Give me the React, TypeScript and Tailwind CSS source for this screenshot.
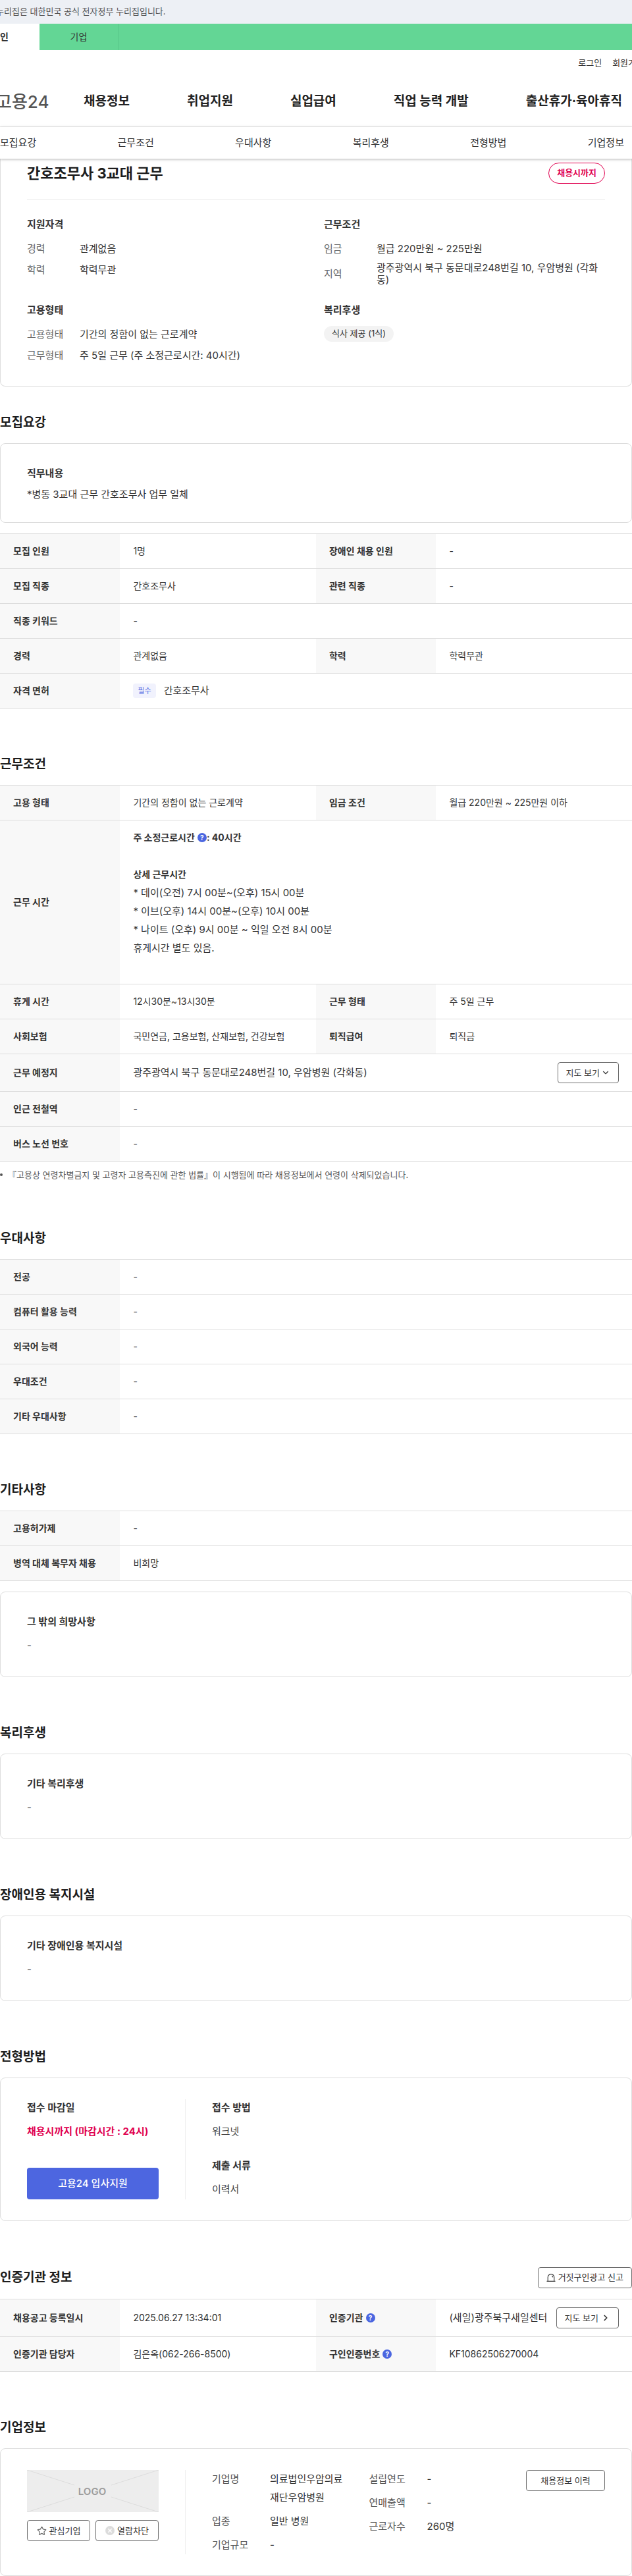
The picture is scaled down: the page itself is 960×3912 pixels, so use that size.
import type { ReactNode } from "react";
import { ChevronDown, ChevronRight, Star } from "lucide-react";

const mainMenu = ["채용정보", "취업지원", "실업급여", "직업 능력 개발", "출산휴가·육아휴직"];

const tabs = ["모집요강", "근무조건", "우대사항", "복리후생", "전형방법", "기업정보"];

type Cell = { label: ReactNode; value: ReactNode };

const summary: { title: string; items: { label: string; value: string }[] }[] = [
  {
    title: "지원자격",
    items: [
      { label: "경력", value: "관계없음" },
      { label: "학력", value: "학력무관" },
    ],
  },
  {
    title: "근무조건",
    items: [
      { label: "임금", value: "월급 220만원 ~ 225만원" },
      { label: "지역", value: "광주광역시 북구 동문대로248번길 10, 우암병원 (각화동)" },
    ],
  },
  {
    title: "고용형태",
    items: [
      { label: "고용형태", value: "기간의 정함이 없는 근로계약" },
      { label: "근무형태", value: "주 5일 근무 (주 소정근로시간: 40시간)" },
    ],
  },
];

const shiftLines = [
  "* 데이(오전) 7시 00분~(오후) 15시 00분",
  "* 이브(오후) 14시 00분~(오후) 10시 00분",
  "* 나이트 (오후) 9시 00분 ~ 익일 오전 8시 00분",
  "휴게시간 별도 있음.",
];

function HelpButton({ label }: { label: string }) {
  return (
    <button
      type="button"
      aria-label={label}
      className="inline-flex h-3.5 w-3.5 items-center justify-center rounded-full bg-[#4b66e0] text-[10px] leading-none font-bold text-white"
    >
      ?
    </button>
  );
}

function OutlineButton({ children, className = "px-3" }: { children: ReactNode; className?: string }) {
  return (
    <button
      type="button"
      className={`flex h-8 shrink-0 items-center justify-center rounded border border-[#6d6d6d] bg-white text-[13px] whitespace-nowrap text-[#333] ${className}`}
    >
      {children}
    </button>
  );
}

function Section({ title, action, children }: { title: string; action?: ReactNode; children: ReactNode }) {
  return (
    <section className={action ? "mt-[70px]" : "mt-[71px] first:mt-[41px]"}>
      <div className={`flex items-center justify-between ${action ? "mb-4" : "mb-[17px]"}`}>
        <h2 className="text-[19px] leading-7 font-bold text-[#1d1d1d]">{title}</h2>
        {action}
      </div>
      {children}
    </section>
  );
}

function Box({ children, className = "" }: { children: ReactNode; className?: string }) {
  return <div className={`rounded-lg border border-[#ddd] px-10 pt-8 text-[15px] ${className}`}>{children}</div>;
}

function NoteBox({ title, className = "" }: { title: string; className?: string }) {
  return (
    <Box className={`pb-[34px] ${className}`}>
      <h3 className="leading-[26px] font-bold">{title}</h3>
      <p className="mt-2.5 leading-[26px] text-[#444]">-</p>
    </Box>
  );
}

function InfoTable({ rows }: { rows: Cell[][] }) {
  return (
    <table className="w-full table-fixed border-separate border-spacing-0 border-t border-[#ddd] text-sm">
      <colgroup>
        <col className="w-[19%]" />
        <col className="w-[31%]" />
        <col className="w-[19%]" />
        <col className="w-[31%]" />
      </colgroup>
      <tbody>
        {rows.map((row, i) => (
          <tr key={i}>
            {row.map((cell, j) => [
              <th
                key={`h${j}`}
                scope="row"
                className="h-[53px] border-b border-[#ddd] bg-[#f8f8f8] px-5 text-left font-bold text-[#333]"
              >
                {cell.label}
              </th>,
              <td
                key={`d${j}`}
                colSpan={row.length === 1 ? 3 : 1}
                className="border-b border-[#ddd] px-5 py-3 text-[#333]"
              >
                {cell.value}
              </td>,
            ])}
          </tr>
        ))}
      </tbody>
    </table>
  );
}

function Header() {
  return (
    <header className="overflow-hidden">
      <div className="flex h-9 items-center bg-[#edf0f5] text-[13px] text-[#555]">
        <span className="-ml-[6px]">누리집은 대한민국 공식 전자정부 누리집입니다.</span>
      </div>

      <div className="flex h-10 bg-[#63d695] text-sm">
        <a href="#" className="-ml-[60px] flex w-[120px] items-center justify-center bg-white font-bold text-[#333]">
          개인
        </a>
        <a href="#" className="flex w-[120px] items-center justify-center border-r border-[#57c688] text-[#333]">
          기업
        </a>
      </div>

      <div className="flex h-10 items-center justify-end gap-4 text-[13px] whitespace-nowrap text-[#333]">
        <a href="#">로그인</a>
        <a href="#" className="-mr-[18px]">
          회원가입
        </a>
      </div>

      <div className="flex h-[77px] items-center border-b border-[#eee]">
        <a href="#" className="-ml-[6px] w-[133px] text-[26px] font-medium whitespace-nowrap text-[#555]">
          고용24
        </a>
        <nav className="flex flex-1 justify-between pr-[15px] text-[19px] font-bold whitespace-nowrap text-[#222]">
          {mainMenu.map((item) => (
            <a key={item} href="#">
              {item}
            </a>
          ))}
        </nav>
      </div>
    </header>
  );
}

function TabBar() {
  return (
    <nav className="relative flex h-12 items-center justify-between bg-white pr-3 text-[15px] text-[#333] shadow-[0_1px_4px_rgba(0,0,0,0.3)]">
      {tabs.map((tab) => (
        <a key={tab} href="#">
          {tab}
        </a>
      ))}
    </nav>
  );
}

function SummaryCard() {
  return (
    <div className="rounded-b-lg border border-t-0 border-[#ddd] px-10 pt-1.5 pb-[34px] text-[15px]">
      <div className="flex h-14 items-start justify-between">
        <h1 className="text-[22px] leading-8 font-bold text-[#1d1d1d]">간호조무사 3교대 근무</h1>
        <span className="flex h-8 items-center rounded-full border border-[#e0004f] px-3 text-[13px] font-bold text-[#e0004f]">
          채용시까지
        </span>
      </div>
      <div className="grid grid-cols-2 gap-x-6 gap-y-[25px] border-t border-[#e8e8e8] pt-[25px]">
        {summary.map((group) => (
          <div key={group.title}>
            <h3 className="leading-6 font-bold">{group.title}</h3>
            <dl className="mt-[13px] flex flex-col gap-2">
              {group.items.map((item) => (
                <div key={item.label} className="flex items-center">
                  <dt className="w-20 shrink-0 leading-6 text-[#666]">{item.label}</dt>
                  <dd className="leading-[18px] break-all">{item.value}</dd>
                </div>
              ))}
            </dl>
          </div>
        ))}
        <div>
          <h3 className="leading-6 font-bold">복리후생</h3>
          <span className="mt-3 inline-flex h-6 items-center rounded-full bg-[#f3f3f3] px-3 text-[13px]">
            식사 제공 (1식)
          </span>
        </div>
      </div>
    </div>
  );
}

const recruitRows: Cell[][] = [
  [
    { label: "모집 인원", value: "1명" },
    { label: "장애인 채용 인원", value: "-" },
  ],
  [
    { label: "모집 직종", value: "간호조무사" },
    { label: "관련 직종", value: "-" },
  ],
  [{ label: "직종 키워드", value: "-" }],
  [
    { label: "경력", value: "관계없음" },
    { label: "학력", value: "학력무관" },
  ],
  [
    {
      label: "자격 면허",
      value: (
        <div className="flex items-center gap-3">
          <span className="rounded bg-[#f1f2fd] px-[7px] text-[11px] leading-[22px] text-[#5b70e4]">필수</span>
          <span className="text-[15px]">간호조무사</span>
        </div>
      ),
    },
  ],
];

const workRows: Cell[][] = [
  [
    { label: "고용 형태", value: "기간의 정함이 없는 근로계약" },
    { label: "임금 조건", value: "월급 220만원 ~ 225만원 이하" },
  ],
  [
    {
      label: "근무 시간",
      value: (
        <div className="leading-7">
          <p className="mb-7 flex items-center font-bold">
            <span className="mr-1">주 소정근로시간</span>
            <HelpButton label="주 소정근로시간 도움말" />: 40시간
          </p>
          <strong className="block">상세 근무시간</strong>
          <div className="mb-7 text-[15px]">
            {shiftLines.map((line) => (
              <p key={line}>{line}</p>
            ))}
          </div>
        </div>
      ),
    },
  ],
  [
    { label: "휴게 시간", value: "12시30분~13시30분" },
    { label: "근무 형태", value: "주 5일 근무" },
  ],
  [
    { label: "사회보험", value: "국민연금, 고용보험, 산재보험, 건강보험" },
    { label: "퇴직급여", value: "퇴직금" },
  ],
  [
    {
      label: "근무 예정지",
      value: (
        <div className="flex items-center justify-between text-[15px]">
          <span>광주광역시 북구 동문대로248번길 10, 우암병원 (각화동)</span>
          <OutlineButton>
            지도 보기
            <ChevronDown size={14} strokeWidth={2} className="ml-0.5" />
          </OutlineButton>
        </div>
      ),
    },
  ],
  [{ label: "인근 전철역", value: "-" }],
  [{ label: "버스 노선 번호", value: "-" }],
];

const preferRows: Cell[][] = ["전공", "컴퓨터 활용 능력", "외국어 능력", "우대조건", "기타 우대사항"].map((label) => [
  { label, value: "-" },
]);

const etcRows: Cell[][] = [
  [{ label: "고용허가제", value: "-" }],
  [{ label: "병역 대체 복무자 채용", value: "비희망" }],
];

const agencyRows: Cell[][] = [
  [
    { label: "채용공고 등록일시", value: "2025.06.27 13:34:01" },
    {
      label: (
        <span className="flex items-center gap-1">
          인증기관 <HelpButton label="인증기관 도움말" />
        </span>
      ),
      value: (
        <div className="flex items-center justify-between whitespace-nowrap">
          <span className="text-[15px]">(새일)광주북구새일센터</span>
          <OutlineButton>
            지도 보기
            <ChevronRight size={14} strokeWidth={3} className="ml-1" />
          </OutlineButton>
        </div>
      ),
    },
  ],
  [
    { label: "인증기관 담당자", value: "김은옥(062-266-8500)" },
    {
      label: (
        <span className="flex items-center gap-1">
          구인인증번호 <HelpButton label="구인인증번호 도움말" />
        </span>
      ),
      value: "KF10862506270004",
    },
  ],
];

function ApplyBox() {
  return (
    <Box className="flex pb-8 leading-[26px]">
      <div className="flex w-[200px] flex-col">
        <h3 className="font-bold">접수 마감일</h3>
        <p className="mt-2.5 font-bold text-[#e0004f]">채용시까지 (마감시간 : 24시)</p>
        <button type="button" className="mt-auto h-12 rounded bg-[#4d66e0] font-medium text-white">
          고용24 입사지원
        </button>
      </div>
      <div className="ml-10 h-[152px] border-l border-[#eee] pl-10">
        <h3 className="font-bold">접수 방법</h3>
        <p className="mt-2.5 text-[#444]">워크넷</p>
        <h3 className="mt-[26px] font-bold">제출 서류</h3>
        <p className="mt-2.5 text-[#444]">이력서</p>
      </div>
    </Box>
  );
}

function CompanyList({ items }: { items: [string, string][] }) {
  return (
    <dl className="flex flex-1 flex-col gap-2 pr-8">
      {items.map(([label, value]) => (
        <div key={label} className="flex">
          <dt className="w-[88px] shrink-0 text-[#555]">{label}</dt>
          <dd className="break-all">{value}</dd>
        </div>
      ))}
    </dl>
  );
}

function CompanyBox() {
  return (
    <Box className="flex pb-8 leading-7">
      <div className="w-[200px] shrink-0">
        {/* Logo placeholder */}
        <svg viewBox="0 0 200 64" className="block h-16 w-full" role="img" aria-label="LOGO">
          <rect width="200" height="64" fill="#ededed" />
          <path d="M0 0l72 23M200 0l-72 23M0 64l72-23M200 64l-72-23" stroke="#dcdcdc" strokeWidth="1" />
          <text x="99" y="38" textAnchor="middle" fontSize="15" fontWeight="600" fill="#9c9c9c">
            LOGO
          </text>
        </svg>
        <div className="mt-3 flex gap-2">
          <OutlineButton className="flex-1 gap-1">
            <Star size={15} strokeWidth={2} className="text-[#6d6d6d]" />
            관심기업
          </OutlineButton>
          <OutlineButton className="flex-1 gap-1">
            <svg viewBox="0 0 14 14" className="h-3.5 w-3.5">
              <circle cx="7" cy="7" r="7" fill="#dcdcdc" />
              <path d="M4.3 4.3l5.4 5.4M9.7 4.3L4.3 9.7" stroke="#fff" strokeWidth="1.3" />
            </svg>
            열람차단
          </OutlineButton>
        </div>
      </div>
      <div className="ml-10 flex flex-1 items-start border-l border-[#eee] pl-10">
        <CompanyList
          items={[
            ["기업명", "의료법인우암의료재단우암병원"],
            ["업종", "일반 병원"],
            ["기업규모", "-"],
          ]}
        />
        <CompanyList
          items={[
            ["설립연도", "-"],
            ["연매출액", "-"],
            ["근로자수", "260명"],
          ]}
        />
        <OutlineButton className="w-[120px]">채용정보 이력</OutlineButton>
      </div>
    </Box>
  );
}

export default function App() {
  return (
    <div className="bg-white font-['Inter','Noto_Sans_CJK_KR',sans-serif] text-[#333]">
      <Header />
      <TabBar />
      <SummaryCard />

      <main>
        <Section title="모집요강">
          <Box className="mb-4 pb-[29px] leading-[26px]">
            <h3 className="font-bold">직무내용</h3>
            <p className="mt-1.5">*병동 3교대 근무 간호조무사 업무 일체</p>
          </Box>
          <InfoTable rows={recruitRows} />
        </Section>

        <Section title="근무조건">
          <InfoTable rows={workRows} />
          <ul className="mt-2 text-[13px] leading-6 text-[#555]">
            <li className="flex items-center">
              <span className="mr-2 h-1 w-1 rounded-full bg-[#555]" />
              『고용상 연령차별금지 및 고령자 고용촉진에 관한 법률』이 시행됨에 따라 채용정보에서 연령이 삭제되었습니다.
            </li>
          </ul>
        </Section>

        <Section title="우대사항">
          <InfoTable rows={preferRows} />
        </Section>

        <Section title="기타사항">
          <InfoTable rows={etcRows} />
          <NoteBox title="그 밖의 희망사항" className="mt-4" />
        </Section>

        <Section title="복리후생">
          <NoteBox title="기타 복리후생" />
        </Section>

        <Section title="장애인용 복지시설">
          <NoteBox title="기타 장애인용 복지시설" />
        </Section>

        <Section title="전형방법">
          <ApplyBox />
        </Section>

        <Section
          title="인증기관 정보"
          action={
            <OutlineButton className="gap-1 px-3">
              <svg viewBox="0 0 14 14" className="h-3.5 w-3.5" fill="none" stroke="currentColor" strokeWidth="1.1">
                <path d="M2.2 12V6.4a4.8 4.8 0 0 1 9.6 0V12M.5 12.4h13M8.2 4.2a2.6 2.6 0 0 1 1.6 2.2" />
              </svg>
              거짓구인광고 신고
            </OutlineButton>
          }
        >
          <InfoTable rows={agencyRows} />
        </Section>

        <Section title="기업정보">
          <CompanyBox />
        </Section>
      </main>
    </div>
  );
}
